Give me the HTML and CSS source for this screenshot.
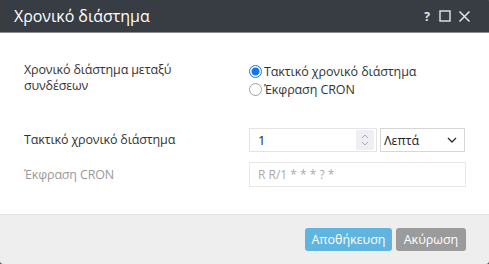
FILE: index.html
```html
<!DOCTYPE html>
<html>
<head>
<meta charset="utf-8">
<link rel="stylesheet" href="styles.css">
</head>
<body>
<div class="dialog">
  <div class="header">
    <div class="title">Χρονικό διάστημα</div>
    <div class="tools">
      <span class="help">?</span>
      <svg class="ico" width="12" height="12" viewBox="0 0 12 12"><rect x="1" y="1" width="10" height="10" fill="none" stroke="#e6e6e6" stroke-width="1.4"/></svg>
      <svg class="ico" width="13" height="13" viewBox="0 0 13 13"><path d="M1.5 1.5 L11.5 11.5 M11.5 1.5 L1.5 11.5" stroke="#e6e6e6" stroke-width="1.5"/></svg>
    </div>
  </div>
  <div class="content">
    <div class="row first">
      <div class="label">Χρονικό διάστημα μεταξύ<br>συνδέσεων</div>
      <div class="radios">
        <label class="radio"><span class="dot on"></span>Τακτικό χρονικό διάστημα</label>
        <label class="radio"><span class="dot"></span>Έκφραση CRON</label>
      </div>
    </div>
    <div class="row second">
      <div class="label">Τακτικό χρονικό διάστημα</div>
      <div class="inputs">
        <div class="num"><span>1</span>
          <div class="spin"><svg width="10" height="14" viewBox="0 0 10 14"><path d="M2 5 L5 2 L8 5 M2 9 L5 12 L8 9" fill="none" stroke="#a8a8a8" stroke-width="1"/></svg></div>
        </div>
        <div class="sel"><span>Λεπτά</span><svg width="10" height="6" viewBox="0 0 10 6"><path d="M1 1 L5 5 L9 1" fill="none" stroke="#333" stroke-width="1.4"/></svg></div>
      </div>
    </div>
    <div class="row third">
      <div class="label muted">Έκφραση CRON</div>
      <div class="cron">R R/1 * * * ? *</div>
    </div>
  </div>
  <div class="footer">
    <button class="btn save">Αποθήκευση</button>
    <button class="btn cancel">Ακύρωση</button>
  </div>
</div>
</body>
</html>
```
FILE: styles.css
```css
html, body { margin: 0; padding: 0; }
body { width: 489px; height: 264px; background: #4a4a4a; font-family: "Open Sans", "Noto Sans", sans-serif; overflow: hidden; }
.dialog { width: 489px; height: 264px; display: flex; flex-direction: column; border-radius: 0 3px 3px 3px; overflow: hidden; }
.header { height: 32px; background: #383c43; border-bottom: 1px solid #8c8c8c; display: flex; align-items: center; justify-content: space-between; padding: 0 18px 0 14px; box-sizing: content-box; }
.title { color: #fff; font-size: 16px; letter-spacing: -0.05px; }
.tools { display: flex; align-items: center; gap: 7px; }
.help { color: #e6e6e6; font-size: 12px; font-weight: bold; width: 10px; text-align: center; }
.content { background: #fff; flex: 1; padding: 0 23px 0 24px; border-bottom: 1px solid #e2e2e2; }
.row { display: flex; }
.label { width: 225px; color: #333; font-size: 12.5px; line-height: 16px; letter-spacing: -0.15px; }
.muted { color: #9a9a9a; }
.first { margin-top: 29px; }
.radios { display: flex; flex-direction: column; }
.radio { display: flex; align-items: center; font-size: 12.5px; letter-spacing: -0.1px; color: #333; height: 18px; }
.dot { width: 11px; height: 11px; border-radius: 50%; border: 1px solid #a0a0a0; margin-right: 2px; box-sizing: content-box; background: #fff; }
.dot.on { border-color: #1a73e8; background: radial-gradient(circle, #1a73e8 0 3.5px, #fff 4.5px); }
.second { margin-top: 30px; align-items: center; }
.inputs { display: flex; gap: 3px; }
.num { width: 128px; height: 24px; border: 1px solid #e3e3e3; display: flex; align-items: center; justify-content: space-between; font-size: 13px; color: #222; padding-left: 8px; box-sizing: border-box; }
.spin { width: 18px; height: 20px; background: #eeeef4; display: flex; align-items: center; justify-content: center; margin-right: 2px; }
.sel { width: 85px; height: 24px; border: 1px solid #d6d6d6; display: flex; align-items: center; justify-content: space-between; padding: 0 7px 0 3px; box-sizing: border-box; font-size: 12.5px; color: #222; }
.third { margin-top: 10px; align-items: center; }
.cron { width: 217px; height: 25px; border: 1px solid #e8e8e8; box-sizing: border-box; display: flex; align-items: center; padding-left: 8px; font-size: 12px; color: #aaa; }
.footer { height: 49px; background: #eeeeee; display: flex; justify-content: flex-end; align-items: flex-start; gap: 4px; padding: 13px 23px 0 0; box-sizing: border-box; }
.btn { border: none; border-radius: 3px; height: 23px; color: #fff; font-family: "Open Sans", "Noto Sans", sans-serif; font-size: 12.5px; padding: 0; }
.save { background: #5fb4e0; width: 87px; }
.cancel { background: #9b9b9b; width: 70px; }
```
